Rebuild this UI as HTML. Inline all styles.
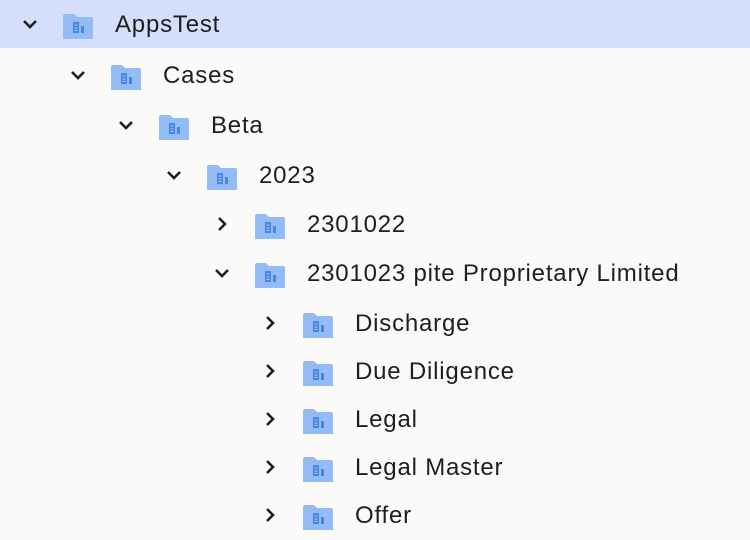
<html><head><style>
body{margin:0;width:750px;height:540px;background:#fbfaf9;font-family:"Liberation Sans",sans-serif;position:relative;overflow:hidden}
.hl{position:absolute;left:0;top:0;width:750px;height:48px;background:#d5defa}
.r{position:absolute;height:30px;font-size:24px;letter-spacing:0.8px;color:#1e1e1e;line-height:30px;white-space:nowrap}
.r svg{position:absolute;top:0}
.r span{position:absolute;top:1px}
</style></head><body>
<div class="hl"></div>
<div id="c"></div>
<script>
var rows=[[0,24,"AppsTest",1],[1,75,"Cases",1],[2,125,"Beta",1],[3,175,"2023",1],[4,224,"2301022",0],[4,273,"2301023 pite Proprietary Limited",1],[5,323,"Discharge",0],[5,371,"Due Diligence",0],[5,419,"Legal",0],[5,467,"Legal Master",0],[5,515,"Offer",0]];
var h="";
rows.forEach(function(r){var x=r[0]*48;
var chev=r[3]?'<path d="M24 12 L30 18 L36 12" stroke="#1e1e1e" stroke-width="2.6" fill="none"/>':'<path d="M27 9 L33 15 L27 21" stroke="#1e1e1e" stroke-width="2.6" fill="none"/>';
h+='<div class="r" style="left:'+x+'px;top:'+(r[1]-15)+'px;width:700px"><svg width="100" height="30" style="left:0">'+chev+
'<path d="M63 7 Q63 5 65 5 L74 5 L77 8 L91 8 Q93 8 93 10 L93 29 Q93 31 91 31 L65 31 Q63 31 63 29 Z" fill="#93bbf5"/>'+
'<rect x="73" y="13" width="6" height="11" fill="#4b87e0"/><rect x="81" y="17" width="3" height="7" fill="#4b87e0"/><rect x="74.5" y="15.5" width="3" height="1" fill="#a9c8f7"/><rect x="74.5" y="18.5" width="3" height="1" fill="#a9c8f7"/><rect x="74.5" y="21" width="3" height="1" fill="#a9c8f7"/>'+
'</svg><span style="left:115px">'+r[2]+'</span></div>';});
document.getElementById("c").innerHTML=h;
</script>
</body></html>
